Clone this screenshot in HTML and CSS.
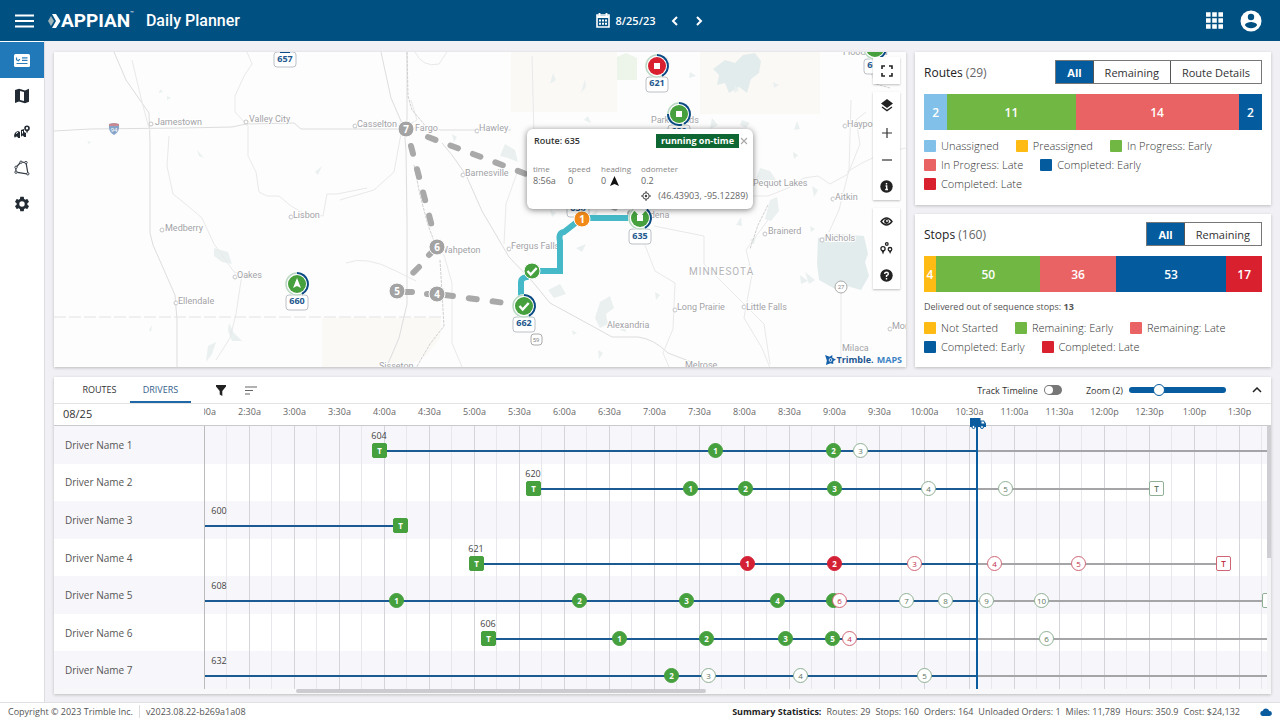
FILE: index.html
```html
<!DOCTYPE html>
<html lang="en">
<head>
<meta charset="utf-8">
<meta name="viewport" content="width=device-width, initial-scale=1">
<title>Appian Daily Planner</title>
<link rel="stylesheet" href="styles.css">
</head>
<body>
<header class="topbar">
  <div class="topbar-left">
    <button class="icon-btn menu-btn" aria-label="Menu"><svg width="19" height="14" viewBox="0 0 19 14"><path d="M0 1.500h19M0 7h19M0 12.500h19" stroke="#fff" stroke-width="2.200"/></svg></button>
    <div class="brand">
      <svg width="13" height="16" viewBox="0 0 13 16"><path d="M3 3L0 8l3 5 3-5z" fill="#9fb4b9"/><path d="M4 1h4l4.500 7-4.500 7H4l4-7z" fill="#fff"/></svg>
      <span class="brand-name">APPIAN</span><span class="brand-tm">™</span>
    </div>
    <h1 class="page-title">Daily Planner</h1>
  </div>
  <div class="date-nav">
    <svg width="14" height="15" viewBox="0 0 14 15"><path d="M1 2h12v12H1z" fill="none" stroke="#fff" stroke-width="1.600"/><path d="M1 4h12M3.500 0v3M10.500 0v3" stroke="#fff" stroke-width="1.800"/><path d="M3 7.500h8M3 10.800h8" stroke="#fff" stroke-width="2" stroke-dasharray="2 1"/></svg>
    <span class="date">8/25/23</span>
    <button class="icon-btn arrow" aria-label="Previous day"><svg width="8" height="10" viewBox="0 0 8 10"><path d="M6 1L2 5l4 4" fill="none" stroke="#fff" stroke-width="2"/></svg></button>
    <button class="icon-btn arrow" aria-label="Next day"><svg width="8" height="10" viewBox="0 0 8 10"><path d="M2 1l4 4-4 4" fill="none" stroke="#fff" stroke-width="2"/></svg></button>
  </div>
  <div class="topbar-right">
    <button class="icon-btn" aria-label="Apps"><svg width="17" height="17" viewBox="0 0 17 17"><path d="M0 2.500h17M0 8.500h17M0 14.500h17" stroke="#fff" stroke-width="4.600" stroke-dasharray="4.600 1.600"/></svg></button>
    <button class="icon-btn" aria-label="Account"><svg width="22" height="22" viewBox="0 0 22 22"><circle cx="11" cy="11" r="10.500" fill="#fff"/><circle cx="11" cy="7" r="3.200" fill="#005082"/><path d="M4.800 15c1-2.200 4-3 6.200-3s5.200.8 6.200 3c-1.400 2.100-3.700 3.200-6.200 3.200S6.200 17.100 4.800 15z" fill="#005082"/></svg></button>
  </div>
</header>

<div class="shell">
  <nav class="sidebar" aria-label="Main">
    <a class="nav-item active" href="#planner" aria-label="Planner"><svg width="16" height="13" viewBox="0 0 16 13"><rect width="16" height="13" rx="1.500" fill="#fff"/><path d="M2.500 3.500v2.200l1.800 1 1.600-1.600M8 3.800h5.500M8 6.400h5.500M2.500 9.500h11" fill="none" stroke="#2a7cba" stroke-width="1.200"/></svg></a>
    <a class="nav-item" href="#map" aria-label="Map"><svg width="16" height="16" viewBox="0 0 16 16"><path d="M1 2l4-1.200 6 1.600 4-1.600v13L11 15.200 5 13.600 1 15z" fill="#222a33"/><path d="M6 3l4 1.100v9L6 12z" fill="#fff"/></svg></a>
    <a class="nav-item" href="#dispatch" aria-label="Dispatch"><svg width="16" height="14" viewBox="0 0 16 14"><path d="M0 11q.3-4 4-5l2 1v6H4q0-1.500-1.500-1.500T1 13zM7 5l3-1v3l2 1v4h-2q-.5-1.500-1.500-1.500T7 12z" fill="#222a33"/><circle cx="13" cy="3.200" r="2" fill="none" stroke="#222a33" stroke-width="1.600"/><path d="M11.800 5h2.600L13 8.500z" fill="#222a33"/><path d="M2 8.500l2-1.200M8.500 6v2.500" stroke="#fff"/></svg></a>
    <a class="nav-item" href="#zones" aria-label="Zones"><svg width="16" height="16" viewBox="0 0 16 16"><path d="M7 2l5 .6L14 14 2 12.200 1.800 7.500z" fill="none" stroke="#333b44" stroke-width="1.200"/><g fill="#fff" stroke="#333b44" stroke-width=".9"><circle cx="7" cy="2.200" r="1.200"/><circle cx="12" cy="2.600" r="1.200"/><circle cx="13.800" cy="13.800" r="1.200"/><circle cx="2" cy="12.200" r="1.200"/><circle cx="2" cy="7.300" r="1.200"/></g></svg></a>
    <a class="nav-item" href="#settings" aria-label="Settings"><svg width="18" height="18" viewBox="0 0 24 24"><path fill="#222a33" d="M19.140 12.940c.04-.3.06-.61.06-.94 0-.32-.02-.64-.07-.94l2.030-1.580c.18-.14.230-.41.120-.61l-1.920-3.320c-.12-.22-.37-.29-.59-.22l-2.390.96c-.5-.38-1.030-.7-1.620-.94l-.36-2.540c-.04-.24-.24-.41-.48-.41h-3.840c-.24 0-.43.170-.47.410l-.36 2.540c-.59.240-1.130.570-1.620.940l-2.390-.96c-.22-.08-.47 0-.59.220L2.740 8.870c-.12.210-.08.470.120.610l2.030 1.580c-.05.3-.09.630-.09.940s.02.640.07.940l-2.030 1.580c-.18.140-.23.410-.12.610l1.920 3.320c.12.220.37.290.59.220l2.390-.96c.5.380 1.030.7 1.620.94l.36 2.540c.05.240.24.410.48.410h3.840c.24 0 .44-.17.470-.41l.36-2.540c.59-.24 1.130-.56 1.620-.94l2.390.96c.22.080.47 0 .59-.22l1.920-3.320c.12-.22.070-.47-.12-.61l-2.010-1.580zM12 15.600a3.600 3.600 0 110-7.200 3.600 3.600 0 010 7.200z"/></svg></a>
  </nav>

  <main class="content">
    <section class="map card" aria-label="Map">
      <svg class="map-canvas" viewBox="54 52 852 315" preserveAspectRatio="xMidYMid slice">
        <g class="parks">
          <path d="M511 52h106v60H511zM700 52h120v62H700zM322 318h119l-1 20-14 18-20 11h-84z"/>
          <path class="forest" d="M617 57l9-4 11 5v22h-20z"/>
          <path class="lake" d="M725 60l10 3 8-8 12-2 6 8-2 12-8 6-4 14-8-6-10 6-4-10-8 2 2-10-6-6zM818 238l20-4 26 2 4 18-3 8 4 14-8 14-14-4-10 4-18-10-2-16z"/>
          <path class="pond" d="M760 168l10 3 8 12-8 4-7-6-8 1zM770 200l7-3 2 14-8 10-6-2zM505 144l10 6 3 12-10-4-8-2zM600 302l10-6 4 12-8 6 2 10-8 4-5-10zM548 290l12-6 6 10-12 4zM229 323l5 10 8 8-10 0-4-10zM216 342l-4 12-6 8 2-16zM214 248l14 4 4 12-10-2-8-6zM805 272l10 8-6 4zM655 292l5 3-4 5zM576 248l10-4-4 8zM735 85l4 5-5 3zM667 56l3 8-7 3zM712 118l6 7-8 4zM690 142l8 4-6 5z"/>
          <path class="pond" d="M550 84l6-4-3-7zM581 93l5-6-1-8zM562 119l6-6 4-4zM584 120l7 3-3-7zM742 120l8 3-4 5-6-3zM794 130l3-9 3 8zM793 152l5 3-4 4zM800 275l8 6-7 3zM197 150l7 8-5-2zM315 172l7-6-4 9zM160 89l3 3-4 1zM167 96l4 2-4 2zM590 215l8-5-3 9zM87 141l4 1-2 2zM149 330l3-5-1 7zM690 72l6 4-7 2zM773 82l6 3-5 3zM810 226l5 3-4 3zM736 225l5-8 1 9zM750 240l6-4-2 8zM572 330l5 3-4 2zM598 350l5 3-4 6zM620 330l5-5 1 7zM452 134l5 3-3 5zM550 210l6 3-4 4zM688 160l6 3-5 3zM812 186l6 4-4 7z"/>
        </g>
        <g class="roads">
          <path class="major" d="M54 131l36-2 92-1 50-1 14-3 48-1 7 6h100q20-3 40 1h70"/>
          <path class="major" d="M114 52l12 28 23 33 1 30v90l3 12 22 50 2 25v47M381 52l10 46 13 30 2 22 1 70v84l-8 34-12 28M407 52v70M442 143l10 12 14 20 16 36 27 46 23 24 18 22 44 24 18 10h26q16 2 30 16l26 10"/>
          <path d="M132 60l10 42 8 30M247 52l5 12-8 12-9 20 0 16 13 14v30l8 16 3 20 8 4 12 0 12 10 14 8 18 2 4-22h10l30-6M169 136l-2 30 6 28 15 12 14 12 12 26 20 28 8 2-6 40-6 24-14 22M411 100l6 20-15 8-8 44-20 18-34 10M532 56l2 80M518 170l-12 34-2 40M654 226l50 10v28l60 60 6 40M645 245l10 26 20 12-2 46-10 24 6 14M768 220l-22 30 6 24-8 44 18 30 8 20M851 100l-2 70-10 40-10 22M841 290v76M430 245l14 10 8 28 0 60 10 24M346 263q20-8 50 8l20 10M415 52q8 16 24 12l8-12M847 172q30-20 59-24M748 196h20l20-8 16-10 14-2 12 8 18-10 12-30-4-24 10-8"/>
          <path class="border" d="M54 317h390"/>
          <path class="rough" d="M407 52l1 44 4 14 12 14 0 8M414 165l6 30 8 30 6 16M440 260l4 66-14 18-14 24M768 205l-10 20-8 24M866 62l10 22 14 4"/>
        </g>
        <g class="dots"><circle cx="151" cy="124" r="2"/><circle cx="246" cy="122" r="2"/><circle cx="162" cy="230" r="2"/><circle cx="235" cy="277" r="2"/><circle cx="176" cy="303" r="2"/><circle cx="291" cy="217" r="2"/><circle cx="355" cy="126" r="2"/><circle cx="477" cy="131" r="2"/><circle cx="463" cy="175" r="2"/><circle cx="509" cy="249" r="2"/><circle cx="675" cy="310" r="2"/><circle cx="744" cy="307" r="2"/><circle cx="765" cy="234" r="2"/><circle cx="822" cy="240" r="2"/><circle cx="833" cy="199" r="2"/><circle cx="845" cy="126" r="2"/><circle cx="890" cy="329" r="2"/></g>
        <g class="places">
          <text x="155" y="125">Jamestown</text><text x="249" y="122">Valley City</text><text x="165" y="231">Medberry</text><text x="237" y="278">Oakes</text><text x="178" y="304">Ellendale</text><text x="293" y="218">Lisbon</text><text x="357" y="127">Casselton</text><text x="415" y="131">Fargo</text><text x="479" y="131">Hawley</text><text x="465" y="176">Barnesville</text><text x="440" y="253">Wahpeton</text><text x="511" y="249">Fergus Falls</text><text x="607" y="328">Alexandria</text><text x="677" y="310">Long Prairie</text><text x="746" y="310">Little Falls</text><text x="768" y="234">Brainerd</text><text x="825" y="241">Nichols</text><text x="835" y="200">Aitkin</text><text x="847" y="127">Haypoint</text><text x="753" y="186">Pequot Lakes</text><text x="651" y="123">Park Rapids</text><text x="637" y="218">Wadena</text><text x="892" y="329">Mora</text><text x="842" y="351">Milaca</text><text x="685" y="368">Melrose</text><text x="379" y="369">Sisseton</text><text x="843" y="55">Floodwood</text>
          <text class="state" x="689" y="275">MINNESOTA</text>
        </g>
        <path d="M109 124l5-1 5 1q1 8-5 11-6-3-5-11z" fill="#86a3c8"/><path d="M109 124l5-1 5 1v2h-10z" fill="#c88a92"/><text class="shield inv" x="114" y="132">94</text>
        <circle cx="841" cy="287" r="6" fill="#fff" stroke="#aaa"/><text class="shield" x="841" y="289">27</text>
        <rect x="531" y="334" width="11" height="11" rx="3" fill="#fff" stroke="#aaa"/><text class="shield" x="536" y="342">59</text>

        <g class="planned"><path d="M428 137l212 80"/><path d="M411 146l24 92"/><path d="M431 253l-2 2M419 267l-6 6"/><path d="M406 292h6M427 294h2"/><path d="M445 295l60 8"/></g>
        <path class="driven" d="M521 305v-23q0-4 6-5l5-6h28v-30q-2-8 4-9l18-14h58"/>

        <g class="gray-stop"><circle cx="406" cy="129" r="8"/><text x="406" y="133">7</text><circle cx="437" cy="247" r="8"/><text x="437" y="251">6</text><circle cx="397" cy="291" r="8"/><text x="397" y="295">5</text><circle cx="437" cy="294" r="8"/><text x="437" y="298">4</text></g>

        <defs>
          <g id="pin"><rect x="-11" y="11" width="22" height="15" rx="3" fill="#fff" stroke="#bcc1c7"/><circle r="12" fill="#fff"/><circle r="11" fill="none" stroke="#bcd8c4" stroke-width="1.500"/><path d="M0-11A11 11 0 0 1 5 9.800" fill="none" stroke="#0b4a85" stroke-width="2"/></g>
          <path id="check" d="M-4.500 0l3.200 3.500 6-6.500" fill="none" stroke="#fff" stroke-width="2.400"/>
        </defs>
        <g class="pin-group" transform="translate(285 41)"><use href="#pin"/><path d="M-5 11h10" stroke="#0b4a85" stroke-width="2"/><text y="21">657</text></g>
        <g class="pin-group" transform="translate(297 284)"><use href="#pin"/><circle r="9" fill="#45a03d"/><path d="M0-6l4 10-4-2-4 2z" fill="#fff"/><text y="20">660</text></g>
        <g class="pin-group" transform="translate(657 66)"><use href="#pin"/><circle r="9" fill="#d9202e"/><path d="M-3-3h6v6h-6z" fill="#fff"/><text y="20">621</text></g>
        <g class="pin-group" transform="translate(679 114)"><use href="#pin"/><path d="M-11 0A11 11 0 0 0 3 10.600" fill="none" stroke="#0b4a85" stroke-width="2"/><circle r="9" fill="#45a03d"/><path d="M-3-3h6v6h-6z" fill="#fff"/><text y="20">638</text></g>
        <g class="pin-group" transform="translate(875 48)"><use href="#pin"/><circle r="9" fill="#45a03d"/><text y="20">665</text></g>
        <g class="pin-group" transform="translate(578 191)"><use href="#pin"/><text y="20">636</text></g>
        <g class="pin-group" transform="translate(640 218)"><use href="#pin"/><circle r="9" fill="#45a03d"/><path d="M-3-3h6v6h-6z" fill="#fff"/><text y="21">635</text></g>
        <g class="pin-group" transform="translate(524 306)"><use href="#pin"/><circle r="9" fill="#45a03d"/><use href="#check"/><text y="20">662</text></g>
        <g transform="translate(532 271)"><circle r="8" fill="#45a03d" stroke="#fff"/><use href="#check"/></g>
        <g class="gray-stop"><circle class="orange" cx="582" cy="219" r="8"/><text x="582" y="223">1</text></g>
        <path d="M632 208h16l-8 9z" fill="#fff"/>
      </svg>

      <article class="popup">
        <div class="popup-head"><h2 class="popup-title">Route: 635</h2><span class="status">running on-time</span><button class="close" aria-label="Close"><svg width="8" height="8" viewBox="0 0 8 8"><path d="M1 1l6 6M7 1L1 7" stroke="#aaa" stroke-width="1.200"/></svg></button></div>
        <dl class="popup-data">
          <div><dt>time</dt><dd>8:56a</dd></div>
          <div><dt>speed</dt><dd>0</dd></div>
          <div><dt>heading</dt><dd>0 <svg width="9" height="10" viewBox="0 0 9 10"><path d="M4.500 0L9 10 4.500 8 0 10z" fill="#111"/></svg></dd></div>
          <div><dt>odometer</dt><dd>0.2</dd></div>
        </dl>
        <p class="coords"><svg width="10" height="10" viewBox="0 0 10 10"><circle cx="5" cy="5" r="3.200" fill="none" stroke="#444"/><circle cx="5" cy="5" r="1.200" fill="#444"/><path d="M5 0v2M5 8v2M0 5h2M8 5h2" stroke="#444"/></svg>(46.43903, -95.12289)</p>
      </article>

      <div class="map-tools">
        <div class="tool-group"><button class="tool" aria-label="Full screen"><svg width="12" height="12" viewBox="0 0 12 12"><path d="M1 4V1h3M8 1h3v3M11 8v3H8M4 11H1V8" fill="none" stroke="#222" stroke-width="1.600"/></svg></button></div>
        <div class="tool-group">
          <button class="tool" aria-label="Layers"><svg width="12" height="13" viewBox="0 0 12 13"><path d="M6 0l6 4.500L6 9 0 4.500z" fill="#222"/><path d="M1 8l5 3.600L11 8" fill="none" stroke="#222" stroke-width="1.300"/></svg></button>
          <button class="tool" aria-label="Zoom in"><svg width="10" height="10" viewBox="0 0 10 10"><path d="M5 0v10M0 5h10" stroke="#333" stroke-width="1.200"/></svg></button>
          <button class="tool" aria-label="Zoom out"><svg width="10" height="10" viewBox="0 0 10 10"><path d="M0 5h10" stroke="#333" stroke-width="1.200"/></svg></button>
          <button class="tool" aria-label="Information"><svg width="13" height="13" viewBox="0 0 13 13"><circle cx="6.500" cy="6.500" r="6.200" fill="#222"/><path d="M6.500 3v1.600M5.500 6h1.200v3.500M5.200 9.500h2.800" stroke="#fff" stroke-width="1.400"/></svg></button>
        </div>
        <div class="tool-group">
          <button class="tool" aria-label="Visibility"><svg width="13" height="9" viewBox="0 0 13 9"><path d="M1 4.500Q6.500-2.500 12 4.500 6.500 11.500 1 4.500z" fill="none" stroke="#222" stroke-width="1.400"/><circle cx="6.500" cy="4.500" r="2.400" fill="#222"/><circle cx="7" cy="4" r=".9" fill="#fff"/></svg></button>
          <button class="tool" aria-label="Locations"><svg width="13" height="13" viewBox="0 0 13 13"><g fill="none" stroke="#222" stroke-width="1.300"><circle cx="3" cy="6.800" r="2.100"/><circle cx="10" cy="7.300" r="1.800"/><circle cx="6.800" cy="2" r="1.300"/></g><path d="M1.500 8.500h3L3 12.500zM8.800 9h2.600l-1.300 3z" fill="#222"/></svg></button>
          <button class="tool" aria-label="Help"><svg width="13" height="13" viewBox="0 0 13 13"><circle cx="6.500" cy="6.500" r="6.200" fill="#222"/><path d="M4.600 5Q4.700 3.200 6.500 3.200T8.400 5Q8.300 6 6.500 6.700V8M6.500 9v1.500" fill="none" stroke="#fff" stroke-width="1.400"/></svg></button>
        </div>
      </div>
      <div class="attribution"><svg width="11" height="10" viewBox="0 0 12 11"><path d="M0 0l5 2 3-2v3l4 2-3 2v3L6 9l-5 2 1-5z" fill="#1560a8"/><circle cx="6" cy="5.500" r="2" fill="#fff"/><circle cx="6" cy="5.500" r="1.100" fill="#1560a8"/></svg><b>Trimble.</b><b class="maps">MAPS</b></div>
    </section>

    <div class="stats">
      <section class="card stat">
        <header class="stat-head"><h2>Routes <span>(29)</span></h2>
          <div class="segmented"><button class="on">All</button><button>Remaining</button><button>Route Details</button></div></header>
        <div class="bar"><span class="c-light" style="flex-grow:2">2</span><span class="c-green" style="flex-grow:11">11</span><span class="c-coral" style="flex-grow:14">14</span><span class="c-blue" style="flex-grow:2">2</span></div>
        <ul class="legend"><li><i class="c-light"></i>Unassigned</li><li><i class="c-amber"></i>Preassigned</li><li><i class="c-green"></i>In Progress: Early</li><li><i class="c-coral"></i>In Progress: Late</li><li><i class="c-blue"></i>Completed: Early</li><li><i class="c-red"></i>Completed: Late</li></ul>
      </section>
      <section class="card stat">
        <header class="stat-head"><h2>Stops <span>(160)</span></h2>
          <div class="segmented"><button class="on">All</button><button>Remaining</button></div></header>
        <div class="bar"><span class="c-amber" style="flex-grow:4">4</span><span class="c-green" style="flex-grow:50">50</span><span class="c-coral" style="flex-grow:36">36</span><span class="c-blue" style="flex-grow:53">53</span><span class="c-red" style="flex-grow:17">17</span></div>
        <p class="note">Delivered out of sequence stops: <b>13</b></p>
        <ul class="legend"><li><i class="c-amber"></i>Not Started</li><li><i class="c-green"></i>Remaining: Early</li><li><i class="c-coral"></i>Remaining: Late</li><li><i class="c-blue"></i>Completed: Early</li><li><i class="c-red"></i>Completed: Late</li></ul>
      </section>
    </div>

    <section class="card timeline">
      <header class="tl-tools">
        <div class="tabs"><button class="tab">ROUTES</button><button class="tab current">DRIVERS</button></div>
        <button class="icon-btn filter" aria-label="Filter"><svg width="10" height="11" viewBox="0 0 10 11"><path d="M0 0h10v1.500L6.300 6v5L3.700 9.500V6L0 1.500z" fill="#222"/></svg></button>
        <button class="icon-btn sort" aria-label="Sort"><svg width="12" height="9" viewBox="0 0 12 9"><path d="M0 1h12M0 4.500h8M0 8h5" stroke="#666" stroke-width="1.200"/></svg></button>
        <div class="tl-right">
          <label class="track">Track Timeline <input type="checkbox" class="switch"></label>
          <label class="zoom">Zoom (2) <input type="range" min="0" max="7" value="2" step="1" class="slider"></label>
          <button class="icon-btn" aria-label="Collapse"><svg width="10" height="6" viewBox="0 0 10 6"><path d="M1 5l4-4 4 4" fill="none" stroke="#222" stroke-width="1.500"/></svg></button>
        </div>
      </header>
      <div class="tl-head"><div class="tl-date">08/25</div>
        <div class="hours"><span>2:00a</span><span>2:30a</span><span>3:00a</span><span>3:30a</span><span>4:00a</span><span>4:30a</span><span>5:00a</span><span>5:30a</span><span>6:00a</span><span>6:30a</span><span>7:00a</span><span>7:30a</span><span>8:00a</span><span>8:30a</span><span>9:00a</span><span>9:30a</span><span>10:00a</span><span>10:30a</span><span>11:00a</span><span>11:30a</span><span>12:00p</span><span>12:30p</span><span>1:00p</span><span>1:30p</span></div>
      </div>
      <div class="tl-body">
        <div class="names"><div>Driver Name 1</div><div>Driver Name 2</div><div>Driver Name 3</div><div>Driver Name 4</div><div>Driver Name 5</div><div>Driver Name 6</div><div>Driver Name 7</div></div>
        <div class="lanes-wrap">
          <div class="lanes">
            <div class="lane"><i class="past" style="left:174px;width:598px"></i><i class="future" style="left:772px;right:0"></i><b class="route" style="left:174px">604</b><span class="term" style="left:174px">T</span><span class="stop" style="left:510px">1</span><span class="stop" style="left:628px">2</span><span class="stop open" style="left:655px">3</span></div>
            <div class="lane"><i class="past" style="left:328px;width:444px"></i><i class="future" style="left:772px;width:179px"></i><b class="route" style="left:328px">620</b><span class="term" style="left:328px">T</span><span class="stop" style="left:485px">1</span><span class="stop" style="left:540px">2</span><span class="stop" style="left:629px">3</span><span class="stop open" style="left:723px">4</span><span class="stop open" style="left:800px">5</span><span class="term open" style="left:951px">T</span></div>
            <div class="lane"><i class="past" style="left:0;width:195px"></i><b class="route" style="left:14px">600</b><span class="term" style="left:195px">T</span></div>
            <div class="lane"><i class="past" style="left:271px;width:501px"></i><i class="future" style="left:772px;width:246px"></i><b class="route" style="left:271px">621</b><span class="term" style="left:271px">T</span><span class="stop late" style="left:542px">1</span><span class="stop late" style="left:629px">2</span><span class="stop open late" style="left:709px">3</span><span class="stop open late" style="left:789px">4</span><span class="stop open late" style="left:873px">5</span><span class="term open late" style="left:1018px">T</span></div>
            <div class="lane"><i class="past" style="left:0;width:772px"></i><i class="future" style="left:772px;right:0"></i><b class="route" style="left:14px">608</b><span class="stop" style="left:191px">1</span><span class="stop" style="left:374px">2</span><span class="stop" style="left:481px">3</span><span class="stop" style="left:572px">4</span><span class="stop" style="left:628px"></span><span class="stop open late" style="left:634px">6</span><span class="stop open" style="left:701px">7</span><span class="stop open" style="left:740px">8</span><span class="stop open" style="left:781px">9</span><span class="stop open" style="left:836px">10</span><span class="term open" style="left:1064px"></span></div>
            <div class="lane"><i class="past" style="left:283px;width:489px"></i><i class="future" style="left:772px;right:0"></i><b class="route" style="left:283px">606</b><span class="term" style="left:283px">T</span><span class="stop" style="left:414px">1</span><span class="stop" style="left:501px">2</span><span class="stop" style="left:580px">3</span><span class="stop" style="left:627px">5</span><span class="stop open late" style="left:644px">4</span><span class="stop open" style="left:841px">6</span></div>
            <div class="lane"><i class="past" style="left:0;width:772px"></i><i class="future" style="left:772px;right:0"></i><b class="route" style="left:14px">632</b><span class="stop" style="left:466px">2</span><span class="stop open" style="left:503px">3</span><span class="stop open" style="left:595px">4</span><span class="stop open" style="left:719px">5</span></div>
          </div>
          <div class="now" style="left:771px"><svg width="16" height="11" viewBox="0 0 16 11"><path d="M0 0h10.500v2.500H14l2 3V9H0z" fill="#0b5c9e"/><path d="M11.500 3.500h2l1 2h-3z" fill="#fff"/><circle cx="3.500" cy="9" r="1.500" fill="#fff" stroke="#0b5c9e"/><circle cx="12" cy="9" r="1.500" fill="#fff" stroke="#0b5c9e"/></svg></div>
        </div>
        <div class="vscroll"><div class="thumb"></div></div>
      </div>
      <div class="hscroll"><div class="thumb"></div></div>
    </section>
  </main>
</div>

<footer class="footer">
  <span>Copyright © 2023 Trimble Inc.</span><span class="version">v2023.08.22-b269a1a08</span>
  <div class="summary"><b>Summary Statistics:</b><span>Routes: 29</span><span>Stops: 160</span><span>Orders: 164</span><span>Unloaded Orders: 1</span><span>Miles: 11,789</span><span>Hours: 350.9</span><span>Cost: $24,132</span></div>
  <svg class="cloud" width="12" height="8" viewBox="0 0 12 8"><path d="M3 8a2.600 2.600 0 01-.3-5.200A3.500 3.500 0 019.300 3 2.500 2.500 0 019.500 8z" fill="#0b5c9e"/></svg>
</footer>
</body>
</html>
```
FILE: styles.css
```css
* { box-sizing: border-box; }
body {
  margin: 0;
  min-height: 100vh;
  display: flex;
  flex-direction: column;
  font-family: "Open Sans", "Noto Sans", sans-serif;
  font-size: 11px;
  color: #333;
  background: #f1f0f4;
}
h1, h2, p, ul, dl, dd { margin: 0; padding: 0; }
button { font: inherit; color: inherit; padding: 0; border: 0; background: none; cursor: pointer; }
svg { display: block; flex: none; }
.icon-btn { display: flex; align-items: center; justify-content: center; }
.card { background: #fff; box-shadow: 0 1px 3px rgba(0, 0, 0, .22); }

/* Top bar */
.topbar {
  display: grid;
  grid-template-columns: 1fr auto 1fr;
  align-items: center;
  height: 41px;
  padding: 0 18px 0 15px;
  background: #005082;
  color: #fff;
}
.topbar-left { display: flex; align-items: center; }
.menu-btn { margin-right: 14px; }
.brand { display: flex; align-items: center; font-family: Roboto, sans-serif; }
.brand-name { font-size: 19px; font-weight: 700; }
.brand-tm { align-self: flex-start; font-size: 6px; }
.page-title { margin-left: 12px; font: 500 16px Roboto, sans-serif; }
.date-nav { display: flex; align-items: center; gap: 5px; margin-left: 28px; }
.date { font-size: 11px; font-weight: 600; margin-right: 5px; }
.arrow { width: 19px; }
.topbar-right { display: flex; justify-content: flex-end; align-items: center; gap: 17px; }

.shell { flex: 1; display: flex; }
.sidebar { width: 45px; padding-top: 1px; background: #fff; border-right: 1px solid #dcdce2; }
.nav-item { display: flex; align-items: center; justify-content: center; height: 36px; }
.nav-item.active { background: #2179ba; }

.content {
  flex: 1;
  min-width: 0;
  display: grid;
  grid-template-columns: minmax(0, 1fr) 356px;
  grid-template-rows: auto 1fr;
  gap: 10px 9px;
  padding: 11px 9px 8px;
}

/* Map */
.map { position: relative; overflow: hidden; background: #fdfdfd; }
.map-canvas { position: absolute; inset: 0; width: 100%; height: 100%; }
.parks path { fill: #fbf9f6; }
.parks .forest { fill: #edf4ea; }
.parks .lake { fill: #e3ecec; }
.parks .pond { fill: #eaf0f0; }
.roads path { fill: none; stroke: #e9e9eb; }
.roads .major { stroke: #dddddf; }
.roads .border { stroke: #e2e2e2; stroke-dasharray: 12 3; }
.roads .rough { stroke: #d0d0d2; stroke-dasharray: 3 1; }
.dots circle { fill: #fff; stroke: #c4c4c6; }
.places text { font: 9px Roboto, sans-serif; fill: #a2a2a6; paint-order: stroke; stroke: #fff; stroke-width: 2px; }
.places .state { font-size: 10px; fill: #b4b4b8; letter-spacing: 1px; }
.shield { font: 6px Roboto, sans-serif; fill: #888; text-anchor: middle; }
.shield.inv { fill: #fff; }
.planned path { fill: none; stroke: #a9a9a9; stroke-width: 6; stroke-linecap: round; stroke-dasharray: 8 16; }
.driven { fill: none; stroke: #45b9c7; stroke-width: 6; }
.gray-stop circle { fill: #a3a3a3; stroke: #fff; }
.gray-stop .orange { fill: #f28a1a; }
.gray-stop text { font: 700 10px "Open Sans", sans-serif; fill: #fff; text-anchor: middle; }
.pin-group text { font: 700 9px "Open Sans", sans-serif; fill: #24588e; text-anchor: middle; }

.popup {
  position: absolute;
  left: 473px;
  top: 77px;
  width: 226px;
  padding: 4px 5px 6px 6px;
  background: #fff;
  border-radius: 6px;
  box-shadow: 0 1px 6px rgba(0, 0, 0, .5);
  color: #666;
}
.popup-head { display: flex; align-items: center; height: 15px; padding-left: 1px; }
.popup-title { flex: 1; font-size: 9px; font-weight: 600; line-height: 13px; color: #333; }
.status { margin-right: 1px; padding: 0 5px; background: #0e6632; color: #fff; font-size: 9px; font-weight: 700; line-height: 14px; }
.close { width: 8px; }
.popup-data { display: grid; grid-template-columns: 35px 33px 40px 1fr; margin-top: 15px; }
.popup-data dt { font-size: 8px; line-height: 11px; color: #888; }
.popup-data dd { display: flex; gap: 4px; align-items: center; font-size: 9px; line-height: 13px; }
.coords { display: flex; justify-content: flex-end; align-items: center; gap: 7px; font-size: 9px; line-height: 14px; margin-top: 2px; }

.map-tools { position: absolute; top: 5px; right: 6px; width: 27px; display: grid; gap: 8px; }
.tool-group { background: #fff; box-shadow: 0 1px 2px rgba(0, 0, 0, .25); }
.tool { display: flex; width: 100%; height: 27px; align-items: center; justify-content: center; }
.attribution { position: absolute; right: 4px; bottom: 1px; display: flex; align-items: center; font-size: 9px; line-height: 12px; color: #1b5590; }
.attribution .maps { margin-left: 3px; color: #3b83c4; }

/* Stat cards */
.stats { display: grid; grid-template-rows: 153px 153px; gap: 9px; }
.stat { padding: 8px 9px; }
.stat-head { display: flex; align-items: center; justify-content: space-between; height: 24px; }
.stat-head h2 { font-size: 12px; font-weight: 400; color: #222; }
.stat-head h2 span { color: #666; }
.segmented { display: flex; height: 24px; border: 1px solid #777; }
.segmented button { padding: 0 11px; font-size: 11px; }
.segmented button + button { border-left: 1px solid #555; }
.segmented .on { background: #045c9e; color: #fff; font-weight: 700; }
.bar { display: flex; height: 36px; margin-top: 10px; }
.bar span { flex: 1 1 0; min-width: 12px; display: flex; align-items: center; justify-content: center; color: #fff; font-size: 12px; font-weight: 600; }
.c-light { background: #81c0e8; }
.c-green { background: #70b843; }
.c-coral { background: #ea6364; }
.c-blue { background: #045c9e; }
.c-amber { background: #fdbb14; }
.c-red { background: #d9202f; }
.legend { display: flex; flex-wrap: wrap; gap: 0 17px; margin-top: 6px; padding-right: 24px; list-style: none; font-weight: 300; line-height: 19px; color: #333; }
.legend li { display: flex; align-items: center; gap: 5px; }
.legend i { width: 12px; height: 12px; border-radius: 1px; }
.note { margin-top: 8px; font-size: 9px; line-height: 14px; color: #555; }
.note + .legend { margin-top: 4px; }

/* Timeline */
.timeline { grid-column: 1 / -1; display: flex; flex-direction: column; }
.tl-tools { display: flex; align-items: center; height: 27px; border-bottom: 1px solid #e3e3e6; font-size: 9px; }
.tabs { display: flex; align-self: stretch; padding-left: 15px; }
.tab { width: 61px; border-bottom: 2px solid transparent; }
.tab.current { color: #37608c; border-color: #2067a5; }
.filter { margin-left: 25px; }
.sort { margin-left: 19px; }
.tl-right { margin-left: auto; display: flex; align-items: center; padding-right: 9px; }
.track, .zoom { display: flex; align-items: center; gap: 6px; }
.zoom { margin: 0 26px 0 24px; }
.switch { appearance: none; width: 18px; height: 10px; margin: 0; padding: 1px; border-radius: 5px; background: #777; }
.switch::before { content: ""; display: block; width: 8px; height: 8px; border-radius: 50%; background: #fff; }
.slider { appearance: none; width: 97px; height: 6px; margin: 0; border-radius: 3px; background: #075d9f; }
.slider::-webkit-slider-thumb { appearance: none; width: 12px; height: 12px; border: 1px solid #075d9f; border-radius: 50%; background: #fff; }
.tl-head { display: flex; height: 22px; border-bottom: 1px solid #c9c9ce; }
.tl-date { width: 150px; padding-left: 9px; font-size: 11px; line-height: 20px; }
.hours { flex: 1; min-width: 0; display: flex; overflow: hidden; font-size: 9px; line-height: 16px; color: #666; }
.hours span { flex: none; width: 45px; text-align: center; }
.hours span:first-child { margin-left: -22px; }
.tl-body { flex: 1; display: flex; }
.names { width: 151px; display: flex; flex-direction: column; border-right: 1px solid #bbb; }
.names div, .lane { flex: 1; min-height: 36px; }
.names div { display: flex; align-items: center; padding-left: 11px; font-size: 10px; color: #555; }
.names div:nth-child(odd), .lane:nth-child(odd) { background-color: #f7f6fa; }
.lanes-wrap { position: relative; flex: 1; min-width: 0; display: flex; }
.lanes { flex: 1; min-width: 0; overflow: hidden; display: flex; flex-direction: column; }
.lane {
  position: relative;
  background-image: linear-gradient(90deg, #e8e8ec 1px, transparent 1px), linear-gradient(90deg, #d4d4d9 1px, transparent 1px);
  background-size: 45px 100%;
  background-position: 21px 0, 44px 0;
}
.lane i { position: absolute; top: 24px; height: 2px; }
.lane .past { background: #1c5a94; }
.lane .future { background: #a5a5a8; }
.lane .route { position: absolute; top: 3px; transform: translateX(-50%); font-size: 9px; font-weight: 400; line-height: 13px; color: #444; }
.stop, .term { position: absolute; top: 17px; width: 15px; height: 15px; margin-left: -7px; border: 1px solid #45a03d; background: #45a03d; color: #fff; font-size: 8px; font-weight: 700; line-height: 13px; text-align: center; }
.stop { border-radius: 50%; }
.term { border-radius: 2px; }
.late { border-color: #d42035; background: #d42035; }
.open { background: #fff; border-color: #8fb094; color: #5d7561; font-weight: 400; }
.open.late { background: #fff; border-color: #cf6574; color: #c32e45; }
.term.open { font-weight: 600; }
.now { position: absolute; top: -8px; bottom: 0; width: 2px; background: #0b5c9e; }
.now svg { margin-left: -6px; }
.vscroll { width: 4px; background: #f4f4f6; }
.vscroll .thumb { height: 50%; background: #cfcfd3; }
.hscroll { height: 5px; padding-left: 242px; background: #f8f8fa; }
.hscroll .thumb { width: 42%; height: 4px; border-radius: 2px; background: #cbcbd0; }

/* Footer */
.footer { display: flex; align-items: center; height: 18px; padding: 0 8px; background: #fff; border-top: 1px solid #e0e0e4; font-size: 9px; color: #555; }
.version { margin-left: 6px; padding-left: 6px; border-left: 1px solid #ddd; }
.summary { display: flex; gap: 5px; margin-left: auto; }
.summary b { font-weight: 700; color: #222; }
.cloud { margin-left: 20px; }
```
